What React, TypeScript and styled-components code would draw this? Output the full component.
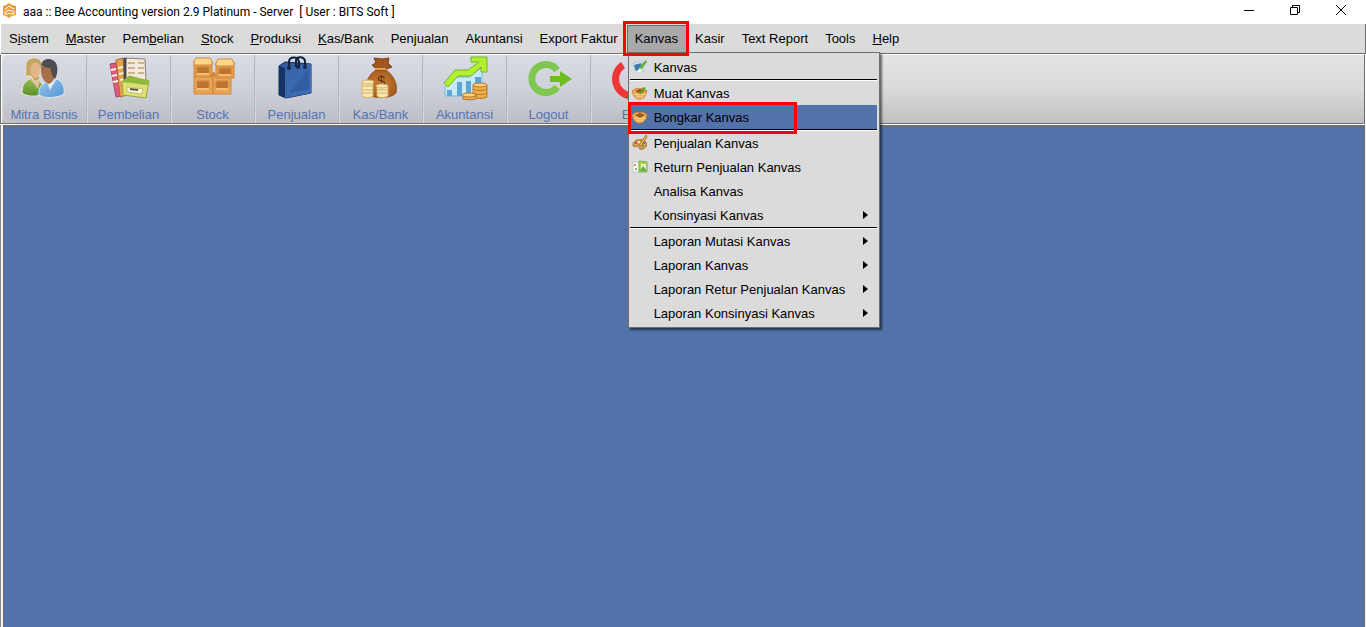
import React from 'react';
import styled, { createGlobalStyle, css } from 'styled-components';

const GlobalStyle = createGlobalStyle`
  *, *::before, *::after { box-sizing: border-box; }
  html, body, #root { height: 100%; }
  body {
    margin: 0;
    overflow: hidden;
    font-family: "Liberation Sans", Arial, sans-serif;
    font-size: 13px;
    color: #000;
  }
  button { font: inherit; color: inherit; }
`;

const Window = styled.div`
  display: flex;
  flex-direction: column;
  height: 100vh;
  background: #fff;
`;

const TitleBar = styled.header`
  display: flex;
  align-items: flex-start;
  height: 24px;
  padding: 0 2px;
  background: #fff;
`;

const Logo = styled.svg`
  margin-top: 3px;
`;

const Title = styled.h1`
  flex: 1;
  margin: 0 0 0 6px;
  font: 400 12px/24px Roboto, "Open Sans", sans-serif;
  white-space: pre;
`;

const WindowButton = styled.button`
  display: flex;
  align-items: center;
  justify-content: center;
  width: 46px;
  height: 20px;
  padding: 0;
  border: 0;
  background: none;
`;

const MenuBar = styled.nav`
  display: flex;
  gap: 1px;
  height: 30px;
  margin-left: 1px;
  background: #dbdbdb;
  border-right: 1px solid #6e6e6e;
  border-bottom: 1px solid #6e6e6e;
`;

const MenuSlot = styled.div`
  position: relative;
  display: flex;
`;

const MenuButton = styled.button<{ $open?: boolean }>`
  padding: 0 8px;
  border: 0;
  background: none;
  white-space: nowrap;
  line-height: 16px;
  ${({ $open }) => $open && css`
    margin-top: 1px;
    background: #a9a9a9;
    box-shadow: inset 1px 1px #6e6e6e;
  `}
`;

const Marker = styled.span`
  position: absolute;
  border: 3px solid #fe0000;
  pointer-events: none;
  z-index: 3;
`;

const MenuMarker = styled(Marker)`
  inset: -3px -3px -3px -4px;
`;

const RowMarker = styled(Marker)`
  inset: -3px 80px -5px -2px;
`;

const Dropdown = styled.div`
  position: absolute;
  top: 28px;
  left: 1px;
  z-index: 2;
  width: 252px;
  padding: 2px 2px 2px 1px;
  background: #dbdbdb;
  border: 1px solid #6e6e6e;
  box-shadow: 2px 2px 2px rgba(0, 0, 0, 0.55);
`;

const MenuRow = styled.button<{ $active?: boolean }>`
  position: relative;
  display: grid;
  grid-template-columns: 24px 1fr 14px;
  align-items: center;
  width: 100%;
  height: 24px;
  padding: 0;
  border: 0;
  text-align: left;
  white-space: nowrap;
  background: ${({ $active }) => ($active ? '#5472aa' : 'transparent')};
`;

const RowIcon = styled.span`
  display: flex;
  padding-left: 2px;
`;

const Divider = styled.hr`
  height: 2px;
  margin: 0;
  border: 0;
  border-top: 1px solid #000;
  background: #fff;
`;

const ToolBar = styled.div`
  display: flex;
  height: 70px;
  margin-right: 1px;
  border: 1px solid #6e6e6e;
  border-top-color: #fff;
  background: linear-gradient(#e4e4e4, #dadada 50%, #c0c0c0);
  box-shadow: inset 1px 0 #fff;
`;

const ToolButton = styled.button`
  display: flex;
  flex-direction: column;
  align-items: center;
  justify-content: space-between;
  width: 84px;
  padding: 0;
  border: 0;
  border-right: 1px solid #b4b5bd;
  box-shadow: inset 1px 0 #d6d7df;
  background: linear-gradient(#d9dbe5, #cfd1da 50%, #bcbdc5);
  color: #5574b4;
  line-height: 16px;
  &:first-child {
    width: 85px;
    margin-left: 1px;
    border-radius: 10px 0 0 10px;
  }
`;

const Workspace = styled.main`
  display: flex;
  flex: 1;
  margin-top: 1px;
  padding: 0 1px 0 2px;
  background: #f4f4f4;
  border-left: 1px solid #8a8a8a;
`;

const Canvas = styled.section`
  flex: 1;
  background: #5472aa;
  border: 1px solid #6e6e6e;
  border-top-width: 2px;
  border-bottom: 0;
`;

const MitraIcon = () => (
  <>
    <defs>
      <linearGradient id="greenShirt" x2="0" y2="1"><stop stopColor="#93bd55" /><stop offset="1" stopColor="#5b8f2c" /></linearGradient>
      <linearGradient id="blueShirt" x2="1" y2="1"><stop stopColor="#97c4ec" /><stop offset="1" stopColor="#5595d6" /></linearGradient>
    </defs>
    <path d="M1 37c0-8 3-12 8-14h8l5 6v9c-6 3-16 3-21-1z" fill="url(#greenShirt)" stroke="#e3ead6" />
    <path d="M9 23l8 10 2-9-5-4z" fill="#dcc092" />
    <path d="M4 20c2-5 0-9 1-13 2-6 12-7 15-2 2 4 0 7-2 10l1 8-5 3-4-6z" fill="#c3a565" stroke="#efe6cc" />
    <path d="M11 8c4-3 9 0 8 5 0 5-1 9-4 9s-6-5-6-9z" fill="#e3b886" />
    <path d="M18 39c-1-7 3-12 9-13l8-3c6 1 9 8 8 15-6 4-19 5-25 1z" fill="url(#blueShirt)" stroke="#dbe8f5" />
    <path d="M25 24l4 10 6-10z" fill="#dfeaf4" />
    <path d="M20 11c2-6 12-6 14 1 1 7-1 14-6 16-5-1-9-9-8-17z" fill="#a67149" />
    <path d="M20 9c2-8 14-8 16 1 1 5 0 9-2 13-4-3-3-7-5-11-3 0-6-1-9-3z" fill="#4e4c50" />
  </>
);

const PembelianIcon = () => (
  <g transform="translate(2 0)">
    <path d="M2 8l6-1 5 33-5 1z" fill="#df5b83" stroke="#b04068" />
    <path d="M8 4l7-2 4 37-7 2z" fill="#e5a14c" stroke="#a86a28" />
    <path d="M3 14l5-1M4 20l5-1M5 26l5-1M10 12l5-1M11 18l5-1M12 24l5-1" stroke="#fff3dc" strokeWidth="2" />
    <path d="M16 2l21 1 1 22-20 2z" fill="#f3eadb" stroke="#8b8175" />
    <path d="M17 2v22" stroke="#4a4a4a" strokeWidth="3" />
    <path d="M20 7h7M20 12h7M20 17h7M30 7h6M30 12h6M30 17h6" stroke="#cbb38c" strokeWidth="2" />
    <path d="M14 26l7-6 20 5-3 17-23-3z" fill="#dde06f" stroke="#9da044" />
    <path d="M14 26l25 3 2-4-20-5z" fill="#8fb73c" />
    <path d="M19 31l16 2-1 5-15-2z" fill="#faf7d9" stroke="#c5c078" />
    <path d="M22 33l8 1" stroke="#5b5b45" strokeWidth="2" />
  </g>
);

const StockIcon = () => (
  <g transform="translate(2 0)" stroke="#cf8a3f">
    <path d="M2 20h19v18H2zM21 20h18v18H21z" fill="#e9a557" />
    <path d="M2 5h18v16H2zM24 6h18v16H24z" fill="#e39a49" />
    <path d="M2 5l2-3h14l2 3v4H2zM24 7l2-4h14l2 4v3H24z" fill="#fbd98c" />
    <path d="M5 11h12v7H5zM27 12h12v7H27zM5 25h12v8H5zM24 25h12v8H24z" fill="#bd7431" />
    <path d="M5 17h12v2H5zM27 18h12v2H27zM5 32h12v2H5zM24 32h12v2H24z" fill="#f4bd70" stroke="none" />
    <path d="M18 20l4-4 2 4" fill="#c9802f" />
  </g>
);

const BagIcon = () => (
  <g transform="translate(2 0)">
    <defs>
      <linearGradient id="bagFront" x2="1" y2="1"><stop stopColor="#3762a6" /><stop offset="1" stopColor="#3f70b8" /></linearGradient>
    </defs>
    <path d="M3 10l6-4 26 2v29l-25 5-7-3z" fill="#315c9f" stroke="#142b55" />
    <path d="M3 10l6 2v30l-6-3z" fill="#173366" />
    <path d="M9 12l26-4v29l-26 5z" fill="url(#bagFront)" />
    <path d="M13 37l20-24v21z" fill="#2a5596" opacity=".6" />
    <path d="M13 13V6c0-6 9-6 10 0v6M20 11V5c0-5 8-5 9 0v7" fill="none" stroke="#10213f" strokeWidth="2" />
    <circle cx="13" cy="12" r="2" fill="#14284b" /><circle cx="22" cy="11" r="2" fill="#14284b" /><circle cx="29" cy="11" r="2" fill="#14284b" />
  </g>
);

const MoneyIcon = () => (
  <g transform="translate(3 0)">
    <defs>
      <radialGradient id="sack"><stop stopColor="#cf8138" /><stop offset="1" stopColor="#a85c22" /></radialGradient>
    </defs>
    <path d="M15 14c-8 5-12 15-10 24 8 5 25 5 30-1 2-10-3-18-10-23z" fill="url(#sack)" stroke="#9a5820" />
    <path d="M13 2l8 1 7-1-1 5 4 4-8 3h-7l-5-5 4-2z" fill="#a0561f" stroke="#7e431b" />
    <path d="M14 13h11" stroke="#e0a052" strokeWidth="2" />
    <text x="16" y="30" fontSize="15" fill="#613015">$</text>
    <g fill="#f8e8b4" stroke="#d4ae62">
      <path d="M1 26v14c2 2 9 2 11 0V26z" /><ellipse cx="7" cy="26" rx="6" ry="2" />
      <path d="M16 30v10c2 2 8 2 11 0V30z" /><ellipse cx="21" cy="30" rx="6" ry="2" />
      <path d="M1 30h11M1 34h11M1 37h11M16 34h11M16 37h11" />
    </g>
  </g>
);

const ChartIcon = () => (
  <g transform="translate(2 0)">
    <path d="M1 40V31l12-10h12l13-10v29z" fill="#c9e9f7" stroke="#77b7df" />
    <path d="M3 34h5v6H3zM13 26h5v14h-5zM22 25h5v15h-5zM31 21h6v19h-6z" fill="#5ea6d8" />
    <path d="M0 27l11-13h13L35 6h-8V1h16v15h-6v-5L27 20H14L4 31z" fill="#b3f02b" stroke="#6fb82a" />
    <g fill="#eeae48" stroke="#b5752d">
      <path d="M29 29v12c4 2 10 2 14 0V29z" /><ellipse cx="36" cy="29" rx="7" ry="2" fill="#fbd279" />
      <path d="M19 39v4c3 1 10 1 13 0v-4z" /><ellipse cx="25" cy="39" rx="7" ry="2" fill="#fbd279" />
      <path d="M29 33c4 2 10 2 14 0M29 37c4 2 10 2 14 0" fill="none" />
    </g>
  </g>
);

const LogoutIcon = () => (
  <>
    <path d="M31 14A14 14 0 1 0 31 31" fill="none" stroke="#80c751" strokeWidth="7" />
    <path d="M24 20h10v-5l12 8-12 8v-5H24z" fill="#6dbd1d" />
  </>
);

const ExitIcon = () => (
  <>
    <path d="M13 9a17 17 0 0 0 8 31a17 17 0 0 0 12-29" fill="none" stroke="#f03535" strokeWidth="7" />
    <path d="M22 2v18" stroke="#f03535" strokeWidth="6" />
  </>
);

const tools = [
  { label: 'Mitra Bisnis', Icon: MitraIcon },
  { label: 'Pembelian', Icon: PembelianIcon },
  { label: 'Stock', Icon: StockIcon },
  { label: 'Penjualan', Icon: BagIcon },
  { label: 'Kas/Bank', Icon: MoneyIcon },
  { label: 'Akuntansi', Icon: ChartIcon },
  { label: 'Logout', Icon: LogoutIcon },
  { label: 'Exit', Icon: ExitIcon },
];

const BrushIcon = () => (
  <>
    <path d="M1 4l9-2 2 10-8 2z" fill="#d8e8f2" stroke="#b5c9d6" />
    <path d="M2 6l7-2 1 6-6 2z" fill="#3b78b1" />
    <path d="M14 1l1 2-6 8-3 1 1-4z" fill="#62ae45" />
    <path d="M4 14l4-5 2 3z" fill="#fff" />
  </>
);

const Basket = ({ filled }: { filled?: boolean }) => (
  <>
    <path d="M0 6l5-3 3 1 3-1 4 3-2 5c-2 4-9 4-11 0z" fill="#efab55" stroke="#cb8238" />
    <path d="M3 6l5-2 5 2-5 3z" fill="#985622" />
    <path d="M2 9l4 1 2-1 2 1 4-1M4 12h7" stroke="#ffd78d" fill="none" />
    {filled && <path d="M5 6l3 1 4-5 2 1-5 6z" fill="#55a52f" />}
  </>
);

const PaletteIcon = () => (
  <>
    <path d="M1 10c0-5 8-7 12-4 4 5-1 9-5 8-2-1 0-3-3-3-2 1-4 1-4-1z" fill="#dda05a" stroke="#a26a32" />
    <circle cx="4" cy="8" r="1" fill="#d22" /><circle cx="7" cy="7" r="1" fill="#fff" />
    <circle cx="12" cy="8" r="1" fill="#36b" /><circle cx="11" cy="11" r="1" fill="#3a4" />
    <path d="M7 10l7-10 1 2-6 9z" fill="#ecc04b" stroke="#a2762c" />
  </>
);

const ReturnIcon = () => (
  <>
    <path d="M1 3h6v10H1z" fill="#fbfbf4" stroke="#c5cabb" />
    <circle cx="3" cy="6" r="1" fill="#d95b76" /><circle cx="4" cy="10" r="1" fill="#5aa05a" />
    <path d="M7 2l8 1v10H7z" fill="#9ed650" stroke="#7bb648" />
    <path d="M9 5h5v6H9z" fill="#e8f3c7" /><path d="M8 12l3-5 4 5" fill="#67ad45" />
  </>
);

type Entry = { label: string; icon?: React.ReactNode; sub?: boolean; active?: boolean; ruled?: boolean };

const entries: Entry[] = [
  { label: 'Kanvas', icon: <BrushIcon />, ruled: true },
  { label: 'Muat Kanvas', icon: <Basket filled /> },
  { label: 'Bongkar Kanvas', icon: <Basket />, active: true, ruled: true },
  { label: 'Penjualan Kanvas', icon: <PaletteIcon /> },
  { label: 'Return Penjualan Kanvas', icon: <ReturnIcon /> },
  { label: 'Analisa Kanvas' },
  { label: 'Konsinyasi Kanvas', sub: true, ruled: true },
  { label: 'Laporan Mutasi Kanvas', sub: true },
  { label: 'Laporan Kanvas', sub: true },
  { label: 'Laporan Retur Penjualan Kanvas', sub: true },
  { label: 'Laporan Konsinyasi Kanvas', sub: true },
];

// An underscore marks the access key that follows it.
const menus = [
  'S_istem', '_Master', 'Pem_belian', '_Stock', '_Produksi', '_Kas/Bank', 'Penjualan',
  'Akuntansi', 'Export Faktur', 'Kanvas', 'Kasir', 'Text Report', 'Tools', '_Help',
];

const AccessLabel = ({ text }: { text: string }) => {
  const at = text.indexOf('_');
  if (at < 0) return <>{text}</>;
  return <>{text.slice(0, at)}<u>{text[at + 1]}</u>{text.slice(at + 2)}</>;
};

const KanvasMenu = () => (
  <Dropdown role="menu">
    {entries.map(({ label, icon, sub, active, ruled }) => (
      <React.Fragment key={label}>
        <MenuRow role="menuitem" $active={active}>
          <RowIcon>{icon && <svg width="16" height="16" viewBox="0 0 16 16">{icon}</svg>}</RowIcon>
          {label}
          {sub && <svg width="5" height="8" viewBox="0 0 5 8"><path d="M0 0l5 4-5 4z" /></svg>}
          {active && <RowMarker />}
        </MenuRow>
        {ruled && <Divider />}
      </React.Fragment>
    ))}
  </Dropdown>
);

export default function App() {
  return (
    <Window>
      <GlobalStyle />
      <TitleBar>
        <Logo width="15" height="15" viewBox="0 0 15 15">
          <path d="M7 0l3 2 4 1v9l-4 1-3 2-3-2-3-1V3l3-1z" fill="#eb9c3c" />
          <path d="M3 6l2-1 2-2 3 2 2 1M3 11V9l2-1 2-1 3 1 2 1v2H9L7 10l-1 1z" fill="none" stroke="#fff" />
        </Logo>
        <Title>{'aaa :: Bee Accounting version 2.9 Platinum - Server  [ User : BITS Soft ]'}</Title>
        <WindowButton aria-label="Minimize">
          <svg width="10" height="10"><path d="M0 5h10v1H0z" /></svg>
        </WindowButton>
        <WindowButton aria-label="Restore">
          <svg width="10" height="10" fill="none" stroke="#000"><path d="M.5 2.5h7v7h-7zM2.5 2V.5h7v7H8" /></svg>
        </WindowButton>
        <WindowButton aria-label="Close">
          <svg width="10" height="10" stroke="#000"><path d="M0 0l10 10M10 0L0 10" /></svg>
        </WindowButton>
      </TitleBar>
      <MenuBar>
        {menus.map((text) => {
          const open = text === 'Kanvas';
          return (
            <MenuSlot key={text}>
              <MenuButton $open={open}><AccessLabel text={text} /></MenuButton>
              {open && <MenuMarker />}
              {open && <KanvasMenu />}
            </MenuSlot>
          );
        })}
      </MenuBar>
      <ToolBar>
        {tools.map(({ label, Icon }) => (
          <ToolButton key={label}>
            <svg width="46" height="46" viewBox="0 -1 46 46"><Icon /></svg>
            {label}
          </ToolButton>
        ))}
      </ToolBar>
      <Workspace><Canvas /></Workspace>
    </Window>
  );
}
